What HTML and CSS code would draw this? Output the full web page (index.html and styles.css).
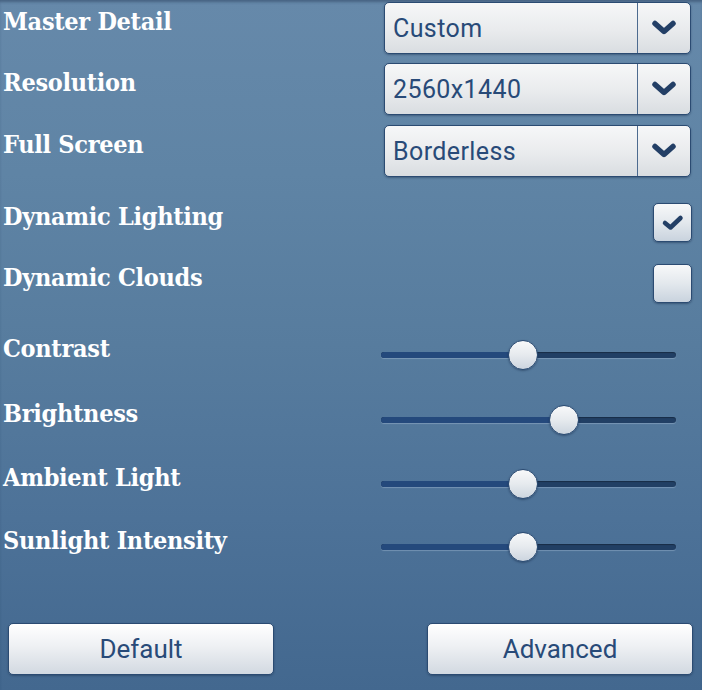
FILE: index.html
```html
<!DOCTYPE html>
<html>
<head>
<meta charset="utf-8">
<link rel="stylesheet" href="styles.css">
</head>
<body>
<div class="panel">
  <div class="row row-select r1">
    <div class="label">Master Detail</div>
    <div class="select"><span class="value">Custom</span><span class="arrow"><svg width="26" height="16" viewBox="0 0 26 16"><path d="M4 3.5 L13 11.5 L22 3.5" fill="none" stroke="#233f66" stroke-width="5.5" stroke-linecap="round" stroke-linejoin="round"/></svg></span></div>
  </div>
  <div class="row row-select r2">
    <div class="label">Resolution</div>
    <div class="select"><span class="value">2560x1440</span><span class="arrow"><svg width="26" height="16" viewBox="0 0 26 16"><path d="M4 3.5 L13 11.5 L22 3.5" fill="none" stroke="#233f66" stroke-width="5.5" stroke-linecap="round" stroke-linejoin="round"/></svg></span></div>
  </div>
  <div class="row row-select r3">
    <div class="label">Full Screen</div>
    <div class="select"><span class="value">Borderless</span><span class="arrow"><svg width="26" height="16" viewBox="0 0 26 16"><path d="M4 3.5 L13 11.5 L22 3.5" fill="none" stroke="#233f66" stroke-width="5.5" stroke-linecap="round" stroke-linejoin="round"/></svg></span></div>
  </div>
  <div class="row row-check c1">
    <div class="label">Dynamic Lighting</div>
    <div class="check"><svg width="24" height="18" viewBox="0 0 24 18"><path d="M4 9 L9.5 13.5 L19.5 4" fill="none" stroke="#233f66" stroke-width="4.5" stroke-linecap="round" stroke-linejoin="round"/></svg></div>
  </div>
  <div class="row row-check c2">
    <div class="label">Dynamic Clouds</div>
    <div class="check"></div>
  </div>
  <div class="row row-slider s1">
    <div class="label">Contrast</div>
    <div class="slider"><div class="track"><div class="fill" style="width:48%"></div></div><div class="thumb" style="left:48%"></div></div>
  </div>
  <div class="row row-slider s2">
    <div class="label">Brightness</div>
    <div class="slider"><div class="track"><div class="fill" style="width:62%"></div></div><div class="thumb" style="left:62%"></div></div>
  </div>
  <div class="row row-slider s3">
    <div class="label">Ambient Light</div>
    <div class="slider"><div class="track"><div class="fill" style="width:48%"></div></div><div class="thumb" style="left:48%"></div></div>
  </div>
  <div class="row row-slider s4">
    <div class="label">Sunlight Intensity</div>
    <div class="slider"><div class="track"><div class="fill" style="width:48%"></div></div><div class="thumb" style="left:48%"></div></div>
  </div>
  <div class="buttons">
    <button class="btn">Default</button>
    <button class="btn">Advanced</button>
  </div>
</div>
</body>
</html>
```
FILE: styles.css
```css
html, body {
  margin: 0;
  padding: 0;
}
body {
  width: 702px;
  height: 690px;
  overflow: hidden;
  background: linear-gradient(180deg, #6689aa 0%, #5f84a5 25%, #577c9e 50%, #4d7298 75%, #43688f 100%);
  box-shadow: inset 0 3px 3px -1px rgba(30, 50, 80, 0.45);
}
.panel {
  display: flex;
  flex-direction: column;
  padding: 2px 11px 0 3px;
}
.row {
  display: flex;
  align-items: center;
  justify-content: space-between;
}
.label {
  font-family: "DejaVu Serif", serif;
  font-stretch: condensed;
  font-weight: bold;
  font-size: 25px;
  color: #ffffff;
  padding-bottom: 13px;
  letter-spacing: -0.3px;
}
.row-select { height: 52px; }
.r2 { margin-top: 9px; }
.r3 { margin-top: 10px; }
.row-check { height: 39px; }
.c1 { margin-top: 26px; }
.c2 { margin-top: 22px; }
.row-slider { height: 30px; }
.s1 { margin-top: 37px; }
.s2 { margin-top: 35px; }
.s3 { margin-top: 34px; }
.s4 { margin-top: 33px; }

.select {
  width: 307px;
  height: 52px;
  box-sizing: border-box;
  border: 1px solid #2b4b72;
  border-radius: 5px;
  background: linear-gradient(180deg, #f6f7f8 0%, #e9ebed 55%, #d9dde1 100%);
  box-shadow: 0 1px 2px rgba(20, 40, 70, 0.4);
  display: flex;
  align-items: stretch;
}
.value {
  flex: 1;
  display: flex;
  align-items: center;
  padding-left: 8px;
  font-family: Roboto, "Liberation Sans", sans-serif;
  font-size: 25px;
  color: #284a78;
  letter-spacing: 0.4px;
  border-right: 1px solid #4d6b8f;
}
.arrow {
  width: 52px;
  display: flex;
  align-items: center;
  justify-content: center;
}
.check {
  width: 39px;
  height: 39px;
  box-sizing: border-box;
  margin-right: -1px;
  border: 1px solid #2b4b72;
  border-radius: 5px;
  background: linear-gradient(180deg, #f7f8f9 0%, #e3e8ed 50%, #c9d3de 100%);
  box-shadow: 0 1px 2px rgba(20, 40, 70, 0.45);
  display: flex;
  align-items: center;
  justify-content: center;
}
.slider {
  position: relative;
  width: 295px;
  height: 30px;
  margin-right: 15px;
  display: flex;
  align-items: center;
}
.track {
  width: 100%;
  height: 6px;
  border-radius: 3px;
  background: #213f64;
  box-shadow: 0 1px 1px rgba(190, 210, 230, 0.35), inset 0 1px 1px rgba(0, 0, 0, 0.3);
  overflow: hidden;
}
.fill {
  height: 100%;
  background: #24497c;
}
.thumb {
  position: absolute;
  top: 0;
  width: 30px;
  height: 30px;
  margin-left: -15px;
  box-sizing: border-box;
  border-radius: 50%;
  border: 1px solid #2b4b72;
  background: linear-gradient(180deg, #f8f9fa 0%, #e6eaee 50%, #ccd5df 100%);
  box-shadow: 0 1px 2px rgba(20, 40, 70, 0.45);
}
.buttons {
  display: flex;
  justify-content: space-between;
  margin-top: 61px;
  padding-left: 5px;
  margin-right: -2px;
}
.btn {
  width: 266px;
  height: 52px;
  box-sizing: border-box;
  border: 1px solid #2b4b72;
  border-radius: 5px;
  background: linear-gradient(180deg, #ffffff 0%, #eef0f3 45%, #d2d9e1 100%);
  box-shadow: 0 1px 2px rgba(20, 40, 70, 0.4);
  font-family: Roboto, "Liberation Sans", sans-serif;
  font-size: 26px;
  color: #284a78;
  padding: 0;
}
```
